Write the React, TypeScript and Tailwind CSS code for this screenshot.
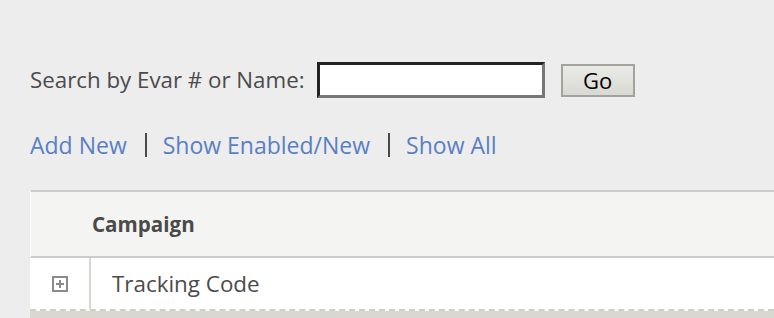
import React from "react";

const Divider: React.FC = () => (
  <span className="inline-block ml-[18px] mr-[16px] w-[2px] h-[24px] bg-[#4a4a4a]" />
);

const App: React.FC = () => {
  return (
    <div
      className="min-h-[318px] w-full bg-[#ededed] pt-[62px] text-[#4b4b4b]"
      style={{ fontFamily: "'Open Sans', Lato, sans-serif" }}
    >
      {/* Search */}
      <div className="flex items-center pl-[30px] h-[36px]">
        <span className="text-[22.3px] leading-none">Search by Evar # or Name:</span>
        <input
          type="text"
          className="ml-[12px] w-[228px] h-[36px] bg-white border-[3px] border-t-[#222] border-l-[#222] border-b-[#777] border-r-[#777] outline-none"
        />
        <button className="ml-[16px] w-[74px] h-[33px] border-2 border-[#a3a39d] bg-gradient-to-b from-[#eaeae6] to-[#d9d9d4] text-[22px] leading-none text-black">
          Go
        </button>
      </div>

      {/* Filters */}
      <div className="flex items-center pl-[30px] mt-[32px] h-[30px] text-[23px] leading-none text-[#5a7fc4]">
        <a href="#">Add New</a>
        <Divider />
        <a href="#">Show Enabled/New</a>
        <Divider />
        <a href="#">Show All</a>
      </div>

      {/* Table */}
      <div className="ml-[30px] mt-[30px] bg-[#d8d8d0]">
        <div className="h-[68px] bg-[#f4f4f2] border-t-2 border-b-2 border-[#cccccc] border-l border-l-white flex items-center pl-[61px]">
          <span className="text-[20.6px] font-bold text-[#4a4a4a]">Campaign</span>
        </div>
        <div className="flex h-[53px] bg-white border-b-2 border-dashed border-[#cfcfca]">
          <div className="w-[61px] flex items-center justify-center border-r-2 border-[#d8d8d2]">
            <span className="w-[16px] h-[16px] border-2 border-[#8a8a8a] flex items-center justify-center">
              <svg width="10" height="10" viewBox="0 0 10 10">
                <path d="M5 1v8M1 5h8" stroke="#8a8a8a" strokeWidth="2" />
              </svg>
            </span>
          </div>
          <div className="flex items-center pl-[21px] text-[22.4px] text-[#4b4b4b]">Tracking Code</div>
        </div>
        <div className="h-[10px]" />
      </div>
    </div>
  );
};

export default App;
